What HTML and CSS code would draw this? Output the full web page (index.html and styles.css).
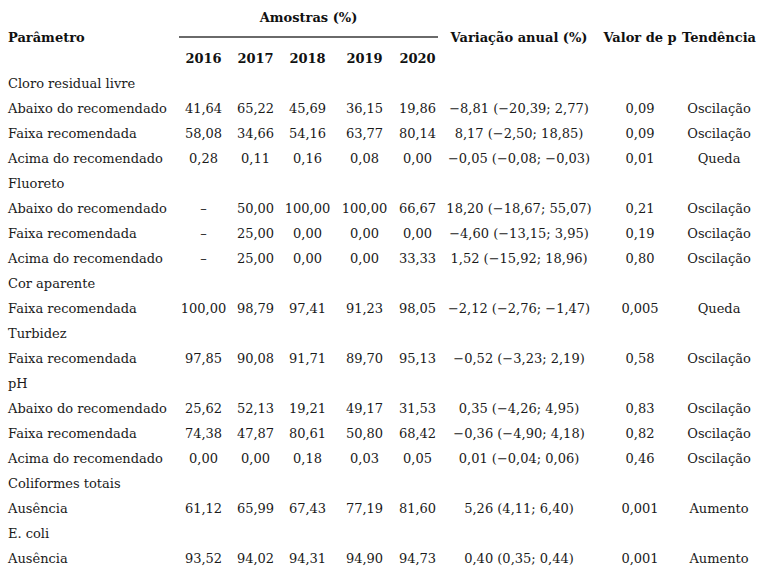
FILE: index.html
```html
<!DOCTYPE html>
<html lang="pt">
<head>
<meta charset="utf-8">
<link rel="stylesheet" href="styles.css">
</head>
<body>
<div class="page">
<table class="tbl">
  <colgroup>
    <col class="c-param">
    <col class="c-y16">
    <col class="c-y17">
    <col class="c-y18">
    <col class="c-y19">
    <col class="c-y20">
    <col class="c-var">
    <col class="c-p">
    <col class="c-tend">
  </colgroup>
  <thead>
    <tr class="h1">
      <th rowspan="2" class="hparam">Parâmetro</th>
      <th colspan="5" class="hamostras">Amostras (%)</th>
      <th rowspan="2" class="hside">Variação anual (%)</th>
      <th rowspan="2" class="hside">Valor de p</th>
      <th rowspan="2" class="hside">Tendência</th>
    </tr>
    <tr class="h2">
      <th>2016</th><th>2017</th><th>2018</th><th>2019</th><th>2020</th>
    </tr>
  </thead>
  <tbody>
    <tr class="grp"><td colspan="9">Cloro residual livre</td></tr>
    <tr><td>Abaixo do recomendado</td><td>41,64</td><td>65,22</td><td>45,69</td><td>36,15</td><td>19,86</td><td>−8,81 (−20,39; 2,77)</td><td>0,09</td><td>Oscilação</td></tr>
    <tr><td>Faixa recomendada</td><td>58,08</td><td>34,66</td><td>54,16</td><td>63,77</td><td>80,14</td><td>8,17 (−2,50; 18,85)</td><td>0,09</td><td>Oscilação</td></tr>
    <tr><td>Acima do recomendado</td><td>0,28</td><td>0,11</td><td>0,16</td><td>0,08</td><td>0,00</td><td>−0,05 (−0,08; −0,03)</td><td>0,01</td><td>Queda</td></tr>
    <tr class="grp"><td colspan="9">Fluoreto</td></tr>
    <tr><td>Abaixo do recomendado</td><td>–</td><td>50,00</td><td>100,00</td><td>100,00</td><td>66,67</td><td>18,20 (−18,67; 55,07)</td><td>0,21</td><td>Oscilação</td></tr>
    <tr><td>Faixa recomendada</td><td>–</td><td>25,00</td><td>0,00</td><td>0,00</td><td>0,00</td><td>−4,60 (−13,15; 3,95)</td><td>0,19</td><td>Oscilação</td></tr>
    <tr><td>Acima do recomendado</td><td>–</td><td>25,00</td><td>0,00</td><td>0,00</td><td>33,33</td><td>1,52 (−15,92; 18,96)</td><td>0,80</td><td>Oscilação</td></tr>
    <tr class="grp"><td colspan="9">Cor aparente</td></tr>
    <tr><td>Faixa recomendada</td><td>100,00</td><td>98,79</td><td>97,41</td><td>91,23</td><td>98,05</td><td>−2,12 (−2,76; −1,47)</td><td>0,005</td><td>Queda</td></tr>
    <tr class="grp"><td colspan="9">Turbidez</td></tr>
    <tr><td>Faixa recomendada</td><td>97,85</td><td>90,08</td><td>91,71</td><td>89,70</td><td>95,13</td><td>−0,52 (−3,23; 2,19)</td><td>0,58</td><td>Oscilação</td></tr>
    <tr class="grp"><td colspan="9">pH</td></tr>
    <tr><td>Abaixo do recomendado</td><td>25,62</td><td>52,13</td><td>19,21</td><td>49,17</td><td>31,53</td><td>0,35 (−4,26; 4,95)</td><td>0,83</td><td>Oscilação</td></tr>
    <tr><td>Faixa recomendada</td><td>74,38</td><td>47,87</td><td>80,61</td><td>50,80</td><td>68,42</td><td>−0,36 (−4,90; 4,18)</td><td>0,82</td><td>Oscilação</td></tr>
    <tr><td>Acima do recomendado</td><td>0,00</td><td>0,00</td><td>0,18</td><td>0,03</td><td>0,05</td><td>0,01 (−0,04; 0,06)</td><td>0,46</td><td>Oscilação</td></tr>
    <tr class="grp"><td colspan="9">Coliformes totais</td></tr>
    <tr><td>Ausência</td><td>61,12</td><td>65,99</td><td>67,43</td><td>77,19</td><td>81,60</td><td>5,26 (4,11; 6,40)</td><td>0,001</td><td>Aumento</td></tr>
    <tr class="grp"><td colspan="9">E. coli</td></tr>
    <tr><td>Ausência</td><td>93,52</td><td>94,02</td><td>94,31</td><td>94,90</td><td>94,73</td><td>0,40 (0,35; 0,44)</td><td>0,001</td><td>Aumento</td></tr>
  </tbody>
</table>
</div>
</body>
</html>
```
FILE: styles.css
```css
html, body {
  margin: 0;
  padding: 0;
  background: #ffffff;
}
.page {
  padding: 0 8px;
}
.tbl {
  border-collapse: collapse;
  table-layout: fixed;
  width: 750px;
  font-family: "DejaVu Serif", "Liberation Serif", serif;
  font-size: 13px;
  color: #1a1a1a;
}
.c-param { width: 171px; }
.c-y16 { width: 49px; }
.c-y17 { width: 55px; }
.c-y18 { width: 49px; }
.c-y19 { width: 65px; }
.c-y20 { width: 41px; }
.c-var { width: 162px; }
.c-p { width: 80px; }
.c-tend { width: 78px; }

.tbl th, .tbl td {
  padding: 0;
  line-height: 25px;
  white-space: nowrap;
  text-align: center;
  vertical-align: top;
}
.tbl th {
  font-weight: bold;
  color: #111;
}
.tbl .hparam {
  text-align: left;
  padding-top: 25px;
}
.tbl .hside {
  padding-top: 25px;
}
.tbl .hamostras {
  padding: 5px 0 6px;
  border-bottom: 2px solid #6a6a6a;
}
.tbl .h2 th {
  padding-top: 8px;
}
.tbl tbody td:first-child {
  text-align: left;
}
.tbl tbody tr {
  height: 25px;
}
```
